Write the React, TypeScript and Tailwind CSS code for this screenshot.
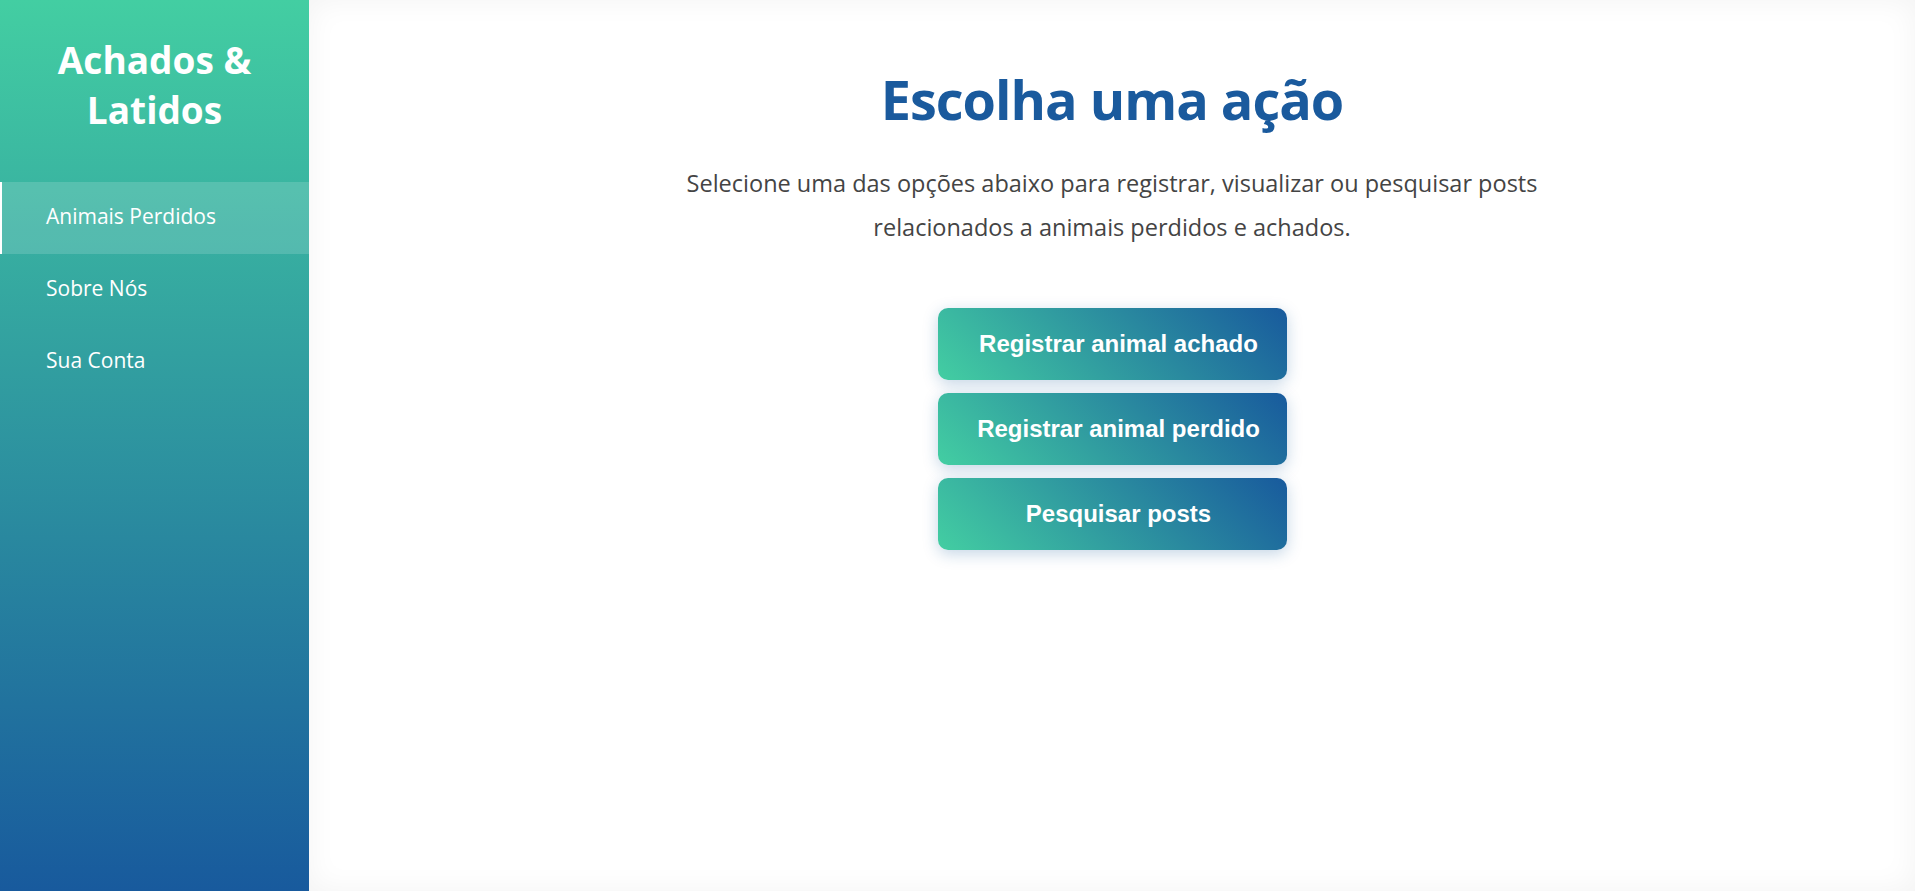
const navItems = [
  { label: 'Animais Perdidos', active: true },
  { label: 'Sobre Nós', active: false },
  { label: 'Sua Conta', active: false },
];

const actions = ['Registrar animal achado', 'Registrar animal perdido', 'Pesquisar posts'];

function Sidebar() {
  return (
    <aside className="flex w-[309px] shrink-0 flex-col bg-[linear-gradient(180deg,#43cea2,#185a9d)] text-white">
      <div className="flex h-[182px] items-center justify-center pb-[12px]">
        <h2 className="text-center text-[37px] font-bold leading-[50px]">
          Achados &amp;
          <br />
          Latidos
        </h2>
      </div>
      <nav className="flex flex-col">
        {navItems.map((item) =>
          item.active ? (
            <a
              key={item.label}
              className="flex h-[72px] items-center border-l-2 border-white bg-white/15 pb-[2px] pl-[44px] text-[21px]"
            >
              {item.label}
            </a>
          ) : (
            <a key={item.label} className="flex h-[72px] items-center pb-[2px] pl-[46px] text-[21px]">
              {item.label}
            </a>
          ),
        )}
      </nav>
    </aside>
  );
}

export default function App() {
  return (
    <div className="flex h-[891px] w-full overflow-hidden font-['Open_Sans',sans-serif]">
      <Sidebar />
      <main className="flex flex-1 flex-col items-center bg-white pt-[66px] shadow-[inset_0_0_30px_rgba(0,0,0,0.05)]">
        <h1 className="text-[54px] font-bold leading-[67px] tracking-[-1px] text-[#1a5a9d]">Escolha uma ação</h1>
        <p className="mt-[28px] max-w-[900px] text-center text-[23.5px] leading-[44px] text-[#444]">
          Selecione uma das opções abaixo para registrar, visualizar ou pesquisar posts relacionados a animais
          perdidos e achados.
        </p>
        <div className="mt-[59px] flex flex-col gap-[13px]">
          {actions.map((label) => (
            <button
              key={label}
              className="flex h-[72px] w-[349px] items-center justify-center rounded-[10px] bg-[linear-gradient(45deg,#43cea2,#185a9d)] pl-[13px] font-['Liberation_Sans',Arial,sans-serif] text-[24px] font-bold text-white shadow-[0_4px_15px_rgba(24,90,157,0.25)]"
            >
              {label}
            </button>
          ))}
        </div>
      </main>
    </div>
  );
}
